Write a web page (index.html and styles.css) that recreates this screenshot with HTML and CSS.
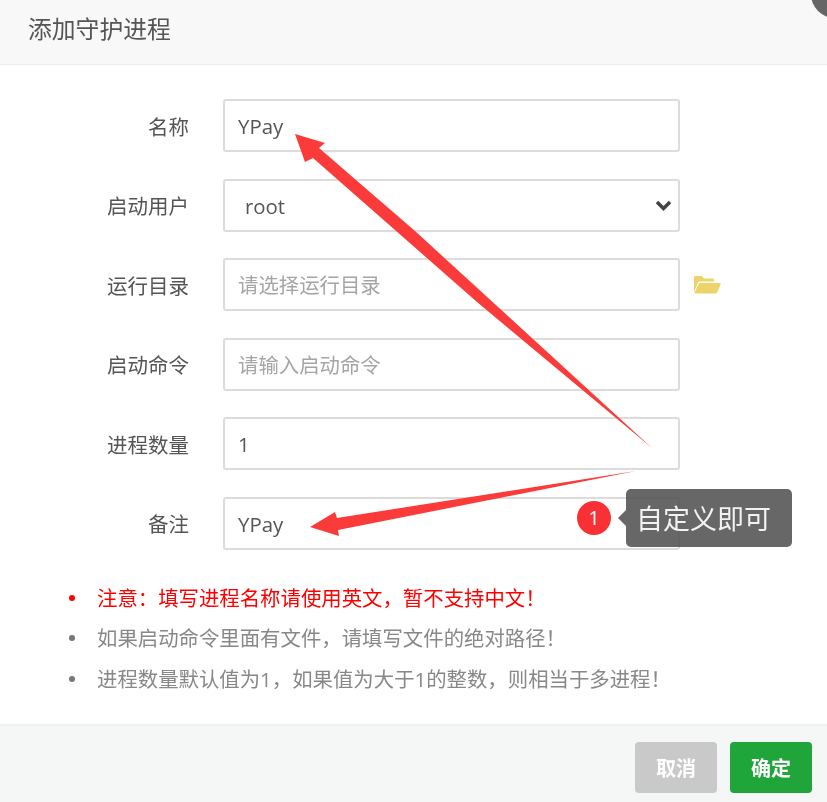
FILE: index.html
```html
<!DOCTYPE html>
<html lang="zh-CN">
<head>
<meta charset="utf-8">
<title>添加守护进程</title>
<link rel="stylesheet" href="styles.css">
</head>
<body>
<div class="dialog">
  <span class="close-corner"></span>
  <header class="dialog-head">添加守护进程</header>
  <form class="dialog-body">
    <div class="row"><label class="label">名称</label><input class="field" value="YPay"></div>
    <div class="row"><label class="label">启动用户</label>
      <div class="select-wrap">
        <select class="field select"><option>root</option></select>
        <svg class="chevron" viewBox="0 0 17 11" aria-hidden="true"><path d="M2 2l6.500 6.500L15 2"/></svg>
      </div>
    </div>
    <div class="row"><label class="label">运行目录</label><input class="field" placeholder="请选择运行目录">
      <svg class="folder" viewBox="0 0 28 19" aria-hidden="true"><path d="M1 17V2.500C1 1.600 1.600 1 2.500 1h6.200l2.400 2.400h8.400c.9 0 1.500.6 1.500 1.500v1.600H7.200c-1 0-1.900.6-2.300 1.500L1 17z"/><path d="M7.300 8h19.400c.8 0 1.200.7.900 1.400l-3.500 8c-.3.700-.9 1.100-1.700 1.100H2.300c-.6 0-1-.5-.7-1.100l4-8.300c.3-.7 1-1.100 1.700-1.100z"/></svg>
    </div>
    <div class="row"><label class="label">启动命令</label><input class="field" placeholder="请输入启动命令"></div>
    <div class="row"><label class="label">进程数量</label><input class="field" value="1"></div>
    <div class="row"><label class="label">备注</label><input class="field" value="YPay"></div>
    <ul class="notes">
      <li class="warn">注意&#65306;填写进程名称请使用英文&#65292;暂不支持中文&#65281;</li>
      <li>如果启动命令里面有文件&#65292;请填写文件的绝对路径&#65281;</li>
      <li>进程数量默认值为1&#65292;如果值为大于1的整数&#65292;则相当于多进程&#65281;</li>
    </ul>
  </form>
  <footer class="dialog-foot">
    <button type="button" class="btn btn-cancel">取消</button>
    <button type="button" class="btn btn-ok">确定</button>
  </footer>

  <svg class="arrows" viewBox="0 0 827 802" aria-hidden="true">
    <polygon points="295,134 325,143 319,148 415,231 652,448 477,302 313,158 305,162"/>
    <polygon points="310,527 335,512 337,518 636,471 338,530 339,536"/>
  </svg>
  <div class="callout">
    <span class="badge">1</span>
    <div class="tip">自定义即可</div>
  </div>
</div>
</body>
</html>
```
FILE: styles.css
```css
* { box-sizing: border-box; }
html, body { margin: 0; padding: 0; background: #fff; }
body {
  font-family: "Open Sans", "Noto Sans CJK SC", sans-serif;
  color: #555;
  overflow: hidden;
}
.dialog {
  position: relative;
  width: 827px;
  height: 802px;
  display: flex;
  flex-direction: column;
  overflow: hidden;
  filter: blur(0.45px);
}
.dialog-head {
  height: 65px;
  padding-left: 28px;
  line-height: 58px;
  font-size: 23.800px;
  color: #555;
  background: #f8f8f8;
  border-bottom: 1px solid #eee;
  flex: none;
}
.close-corner {
  position: absolute;
  right: -32px;
  top: -30px;
  width: 48px;
  height: 48px;
  border-radius: 50%;
  background: #666;
}
.dialog-body {
  flex: 1;
  margin: 0;
  padding-top: 34px;
  display: flex;
  flex-direction: column;
}
.row {
  display: flex;
  align-items: center;
  height: 53px;
  margin-bottom: 26.600px;
}
.label {
  width: 189px;
  text-align: right;
  font-size: 20.500px;
  color: #555;
  flex: none;
}
.field {
  width: 457px;
  height: 53px;
  margin-left: 34px;
  padding: 1px 13px 0;
  border: 2px solid #dcdcdc;
  border-radius: 3px;
  background: #fff;
  color: #555;
  font: 20.400px "Open Sans", "Noto Sans CJK SC", sans-serif;
  outline: none;
  flex: none;
}
.field::placeholder { color: #a5a5a5; opacity: 1; }
.select-wrap {
  position: relative;
  display: flex;
  flex: none;
}
.select {
  padding-left: 20px;
  appearance: none;
  -webkit-appearance: none;
}
.chevron {
  position: absolute;
  right: 8px;
  top: 21px;
  width: 17px;
  height: 11px;
  fill: none;
  stroke: #444;
  stroke-width: 3.500;
  pointer-events: none;
}
.folder {
  width: 28px;
  height: 19px;
  margin-left: 13px;
  fill: #ecd36a;
  flex: none;
}
.notes {
  margin: 0;
  padding: 1px 0 0 69px;
  list-style: none;
  font-size: 20.400px;
  line-height: 40.500px;
  color: #888;
}
.notes li {
  height: 40.500px;
  display: flex;
  align-items: center;
  gap: 22px;
}
.notes li::before {
  content: "";
  width: 6px;
  height: 6px;
  border-radius: 50%;
  background: #777;
  flex: none;
}
.notes .warn { color: #f00; }
.notes .warn::before { background: #f00; }
.dialog-foot {
  height: 78px;
  flex: none;
  background: #f5f7f7;
  border-top: 2px solid #f0f1f1;
  display: flex;
  justify-content: flex-end;
  gap: 13px;
  padding: 16px 15px 0 0;
}
.btn {
  width: 82px;
  height: 51px;
  border: 0;
  border-radius: 4px;
  color: #fff;
  font: 700 20px "Open Sans", "Noto Sans CJK SC", sans-serif;
}
.btn-cancel { background: #c9c9c9; }
.btn-ok { background: #20a53a; }
.arrows {
  position: absolute;
  left: 0;
  top: 0;
  width: 827px;
  height: 802px;
  fill: #fb3a3a;
  pointer-events: none;
}
.callout {
  position: absolute;
  left: 577px;
  top: 489px;
  display: flex;
  align-items: center;
  gap: 15px;
}
.badge {
  width: 34px;
  height: 34px;
  border-radius: 50%;
  background: #f93034;
  color: #fff;
  font-size: 20px;
  line-height: 33px;
  text-align: center;
}
.tip {
  position: relative;
  width: 166px;
  height: 58px;
  padding-left: 10px;
  border-radius: 5px;
  background: rgba(82, 82, 82, .88);
  color: #f2f2f2;
  font-size: 27px;
  line-height: 59px;
}
.tip::before {
  content: "";
  position: absolute;
  left: -8px;
  top: 21px;
  border: 8px solid transparent;
  border-left: 0;
  border-right-color: rgba(82, 82, 82, .88);
}
```
